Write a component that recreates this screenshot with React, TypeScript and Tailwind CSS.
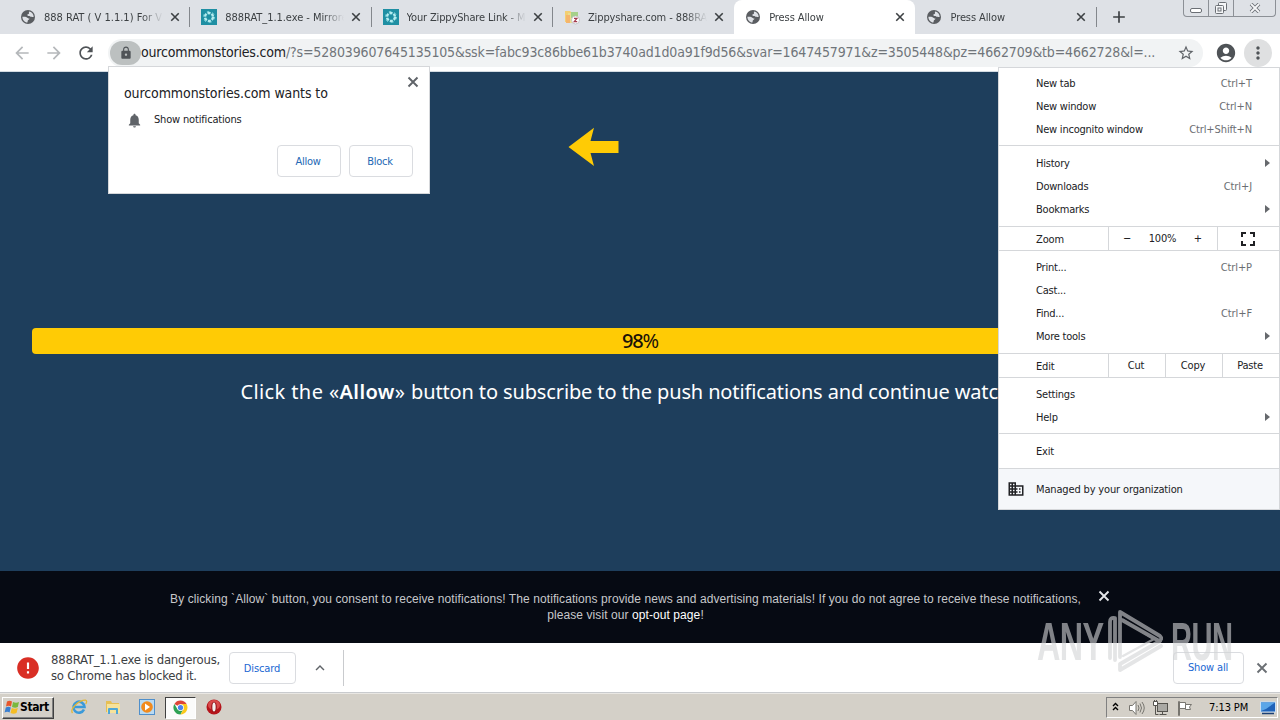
import type { ReactNode } from 'react';
import {
  MdAccountCircle,
  MdAdd,
  MdArrowBack,
  MdArrowForward,
  MdDomain,
  MdError,
  MdExpandLess,
  MdFullscreen,
  MdLock,
  MdMoreVert,
  MdNotifications,
  MdRefresh,
  MdStarBorder,
} from 'react-icons/md';

function CrossIcon({ className }: { className: string }) {
  return (
    <svg viewBox="0 0 12 12" className={`size-3 shrink-0 ${className}`}>
      <path d="M1.500 1.500l9 9M10.500 1.500l-9 9" stroke="currentColor" strokeWidth="1.900" />
    </svg>
  );
}

function GlobeIcon() {
  return (
    <svg viewBox="0 0 16 16" className="size-4 shrink-0">
      <circle cx="8" cy="8" r="7" fill="#5a5d61" />
      <path d="M9 2.4c2.700.4 4.700 2.600 4.700 5.400-1 .5-1.600-.3-2.500-.1-.8.2-1-.6-1.700-.7-.9-.1-1.500.2-2-.4-.6-.7.2-1.300 1-1.500.7-.2.3-1.300.5-2.700z" fill="#dee1e6" />
      <path d="M2.400 7.700c1.500.2 3-.2 4.200.6 1 .6 1.500 1.200 2.700 1.300.5.6-.5 1.200-1.100 1.500-.7.4-.3 1.500-.8 2.500-2.800-.2-5-2.700-5-5.900z" fill="#dee1e6" />
    </svg>
  );
}

function MirrorIcon() {
  return (
    <svg viewBox="0 0 16 16" className="size-4 shrink-0">
      <rect width="16" height="16" fill="#1f8fa3" />
      <circle cx="8" cy="8" r="4" fill="none" stroke="#b5edf0" strokeWidth="2.400" strokeDasharray="3.100 1.100" />
      <circle cx="8" cy="8" r="5.600" fill="none" stroke="#7bd0d8" strokeWidth="1" strokeDasharray="2.500 3.360" />
    </svg>
  );
}

function ZippyIcon() {
  return (
    <svg viewBox="0 0 16 16" className="size-4 shrink-0">
      <path d="M1 2h5l1 1v10H1z" fill="#f3cf72" />
      <path d="M4 4h9v10H4z" fill="#e9dd8e" />
      <path d="M7 3h7v6H7z" fill="#a5d08a" />
      <path d="M2 6h4v8H2z" fill="#f5b56b" />
      <circle cx="11.500" cy="11" r="4" fill="#fff" stroke="#b9b9bf" strokeWidth=".8" />
      <path d="M10 9.300h3L10.200 12.700h3" fill="none" stroke="#a33a4c" strokeWidth="1.200" />
    </svg>
  );
}

const tabs: { title: string; icon: ReactNode; active?: boolean; sep?: boolean; tracking: string }[] = [
  { title: '888 RAT ( V 1.1.1) For V', icon: <GlobeIcon />, sep: true, tracking: 'tracking-[0px]' },
  { title: '888RAT_1.1.exe - Mirrored', icon: <MirrorIcon />, sep: true, tracking: 'tracking-[-0.05px]' },
  { title: 'Your ZippyShare Link - Mirrored', icon: <MirrorIcon />, sep: true, tracking: 'tracking-[-0.15px]' },
  { title: 'Zippyshare.com - 888RAT_1.1', icon: <ZippyIcon />, tracking: 'tracking-[-0.1px]' },
  { title: 'Press Allow', icon: <GlobeIcon />, active: true, tracking: 'tracking-[-0.1px]' },
  { title: 'Press Allow', icon: <GlobeIcon />, sep: true, tracking: 'tracking-[-0.1px]' },
];

function TabStrip() {
  return (
    <div className="relative flex h-[34px] shrink-0 bg-[#dee1e6] pl-[9px]">
      {tabs.map((tab, i) => (
        <div
          key={i}
          className={`flex w-[181.3px] shrink-0 items-center pl-[11px] ${tab.active ? 'rounded-t-lg bg-white' : ''}`}
        >
          {tab.icon}
          <span
            className={`ml-[8px] mt-[2px] w-[119px] overflow-hidden whitespace-nowrap text-[11px] text-[#3c4043] [mask-image:linear-gradient(to_right,black_82%,transparent)] ${tab.tracking}`}
          >
            {tab.title}
          </span>
          <CrossIcon className="ml-[6px] p-px text-[#3c4043]" />
          <span className={`ml-auto h-5 w-px ${tab.sep ? 'bg-[#83878c]' : ''}`} />
        </div>
      ))}
      <MdAdd className="ml-[12px] mt-[7px] size-5 text-[#3c4043]" />

      {/* Window buttons */}
      <div className="absolute right-[4px] top-0 flex h-[17px] w-[93px] rounded-b-[4px] border border-t-0 border-[#8c9096] text-[#6b6f75]">
        <div className="flex w-[25px] justify-center border-r border-[#8c9096] pt-[8px]">
          <span className="h-[5px] w-[12px] rounded-[2px] border border-[#6b6f75] bg-white" />
        </div>
        <div className="flex w-[25px] justify-center border-r border-[#8c9096] pt-[2px]">
          <svg viewBox="0 0 14 13" className="h-[13px] w-[14px]" fill="#f5f6f8" stroke="#6b6f75">
            <rect x="4.500" y=".5" width="8" height="8" rx="1" />
            <rect x="1.500" y="3.500" width="8" height="8" rx="1" />
            <rect x="4" y="6" width="3" height="3" />
          </svg>
        </div>
        <div className="flex flex-1 justify-center pt-[3px]">
          <svg viewBox="0 0 12 10" className="h-[10px] w-[12px]">
            <path d="M2 1l8 8M10 1L2 9" stroke="#6b6f75" strokeWidth="3.600" />
            <path d="M2 1l8 8M10 1L2 9" stroke="#f5f6f8" strokeWidth="1.800" />
          </svg>
        </div>
      </div>
    </div>
  );
}

function Toolbar() {
  return (
    <div className="flex h-[38px] shrink-0 items-center border-b border-[#d3dbe2] bg-white pl-[12px]">
      <MdArrowBack className="size-5 text-[#b5b8bb]" />
      <MdArrowForward className="ml-[12px] size-5 text-[#b5b8bb]" />
      <MdRefresh className="ml-[12px] size-5 text-[#4f5357]" />
      <div className="ml-[12px] flex h-7 w-[1095px] items-center rounded-full bg-[#f1f3f4] pl-[2px]">
        <span className="flex h-6 w-[31px] shrink-0 items-center justify-center rounded-full bg-[#bcc0c0]">
          <MdLock className="size-[14px] text-[#4f5357]" />
        </span>
        <span className="w-[1036px] shrink-0 whitespace-nowrap text-[14px] text-[#70757a]">
          <span className="tracking-[-0.18px] text-[#202124]">ourcommonstories.com</span>
          <span className="tracking-[-0.145px]">
            /?s=528039607645135105&amp;ssk=fabc93c86bbe61b3740ad1d0a91f9d56&amp;svar=1647457971&amp;z=3505448&amp;pz=4662709&amp;tb=4662728&amp;l=...
          </span>
        </span>
        <MdStarBorder className="size-[18px] shrink-0 text-[#5f6368]" />
      </div>
      <MdAccountCircle className="ml-[12px] size-[22px] shrink-0 text-[#4f5357]" />
      <span className="ml-[7px] flex size-7 shrink-0 items-center justify-center rounded-full bg-[#dfe0e1]">
        <MdMoreVert className="size-5 text-[#4f5357]" />
      </span>
    </div>
  );
}

function PermissionPopup() {
  return (
    <div className="absolute left-[108px] top-[66px] h-[128px] w-[322px] border border-[#d5d7da] bg-white pl-[15px] pr-[16px] pt-[7px] text-[#202124]">
      <div className="flex h-[37px] items-center justify-between">
        <span className="whitespace-nowrap pt-[2px] text-[14px] tracking-[-0.1px]">ourcommonstories.com wants to</span>
        <CrossIcon className="-mr-[6px] mb-[21px] text-[#5f6368]" />
      </div>
      <div className="flex h-4 items-center pl-[2px]">
        <MdNotifications className="mt-[2px] size-[17px] text-[#5f6368]" />
        <span className="ml-[11px] mt-[2px] text-[11px] tracking-[-0.17px]">Show notifications</span>
      </div>
      <div className="mt-[18px] flex justify-end gap-2">
        {['Allow', 'Block'].map((label) => (
          <button key={label} className="h-8 w-16 rounded-[4px] border border-[#dadce0] pr-[2px] pt-[2px] text-[11px] tracking-[-0.3px] text-[#2368b5]">
            {label}
          </button>
        ))}
      </div>
    </div>
  );
}

function MenuItem({ label, keys, sub }: { label: string; keys?: string; sub?: boolean }) {
  return (
    <div className="flex h-[23px] items-center pl-[37px]">
      <span className="tracking-[-0.22px]">{label}</span>
      {keys && <span className="ml-auto mr-[27px] tracking-[-0.1px] text-[#6b6e72]">{keys}</span>}
      {sub && (
        <svg viewBox="0 0 5 8" className="mb-[3px] ml-auto mr-[9px] h-2 w-[5px]">
          <path d="M0 0l5 4-5 4z" fill="#66696d" />
        </svg>
      )}
    </div>
  );
}

function ChromeMenu() {
  return (
    <div className="absolute left-[998px] top-[67px] h-[443px] w-[282px] border border-[#d5d7da] bg-white text-[11px] text-[#202124]">
      <div className="h-[78px] border-b border-[#d5d7da] pt-[5px]">
        <MenuItem label="New tab" keys="Ctrl+T" />
        <MenuItem label="New window" keys="Ctrl+N" />
        <MenuItem label="New incognito window" keys="Ctrl+Shift+N" />
      </div>
      <div className="h-[81px] border-b border-[#d5d7da] pt-[7px]">
        <MenuItem label="History" sub />
        <MenuItem label="Downloads" keys="Ctrl+J" />
        <MenuItem label="Bookmarks" sub />
      </div>
      <div className="flex h-[24px] items-center border-b border-[#d5d7da] tracking-[-0.15px]">
        <span className="w-[109px] pl-[37px] pt-[3px]">Zoom</span>
        <span className="flex h-full w-[109px] items-center justify-between border-l border-[#d5d7da] pl-[14px] pr-[15px] pt-px">
          <span>−</span>
          <span>100%</span>
          <span>+</span>
        </span>
        <span className="flex h-full flex-1 items-center justify-center border-l border-[#d5d7da] pr-[2px]">
          <MdFullscreen className="size-6" />
        </span>
      </div>
      <div className="h-[103px] border-b border-[#d5d7da] pt-[6px]">
        <MenuItem label="Print..." keys="Ctrl+P" />
        <MenuItem label="Cast..." />
        <MenuItem label="Find..." keys="Ctrl+F" />
        <MenuItem label="More tools" sub />
      </div>
      <div className="flex h-[24px] items-center border-b border-[#d5d7da] tracking-[-0.2px]">
        <span className="w-[109px] pl-[37px] pt-[3px]">Edit</span>
        {['Cut', 'Copy', 'Paste'].map((label) => (
          <span key={label} className="flex h-full w-[57px] items-center justify-center border-l border-[#d5d7da] pr-[2px] pt-px">
            {label}
          </span>
        ))}
      </div>
      <div className="h-[56px] border-b border-[#d5d7da] pt-[6px]">
        <MenuItem label="Settings" />
        <MenuItem label="Help" sub />
      </div>
      <div className="h-[35px] border-b border-[#d5d7da] pt-[7px]">
        <MenuItem label="Exit" />
      </div>
      <div className="flex h-[40px] items-center bg-[#f5f7fa] pl-[8px]">
        <MdDomain className="size-[18px] text-[#202124]" />
        <span className="ml-[11px] mt-[2px] tracking-[-0.15px]">Managed by your organization</span>
      </div>
    </div>
  );
}

function PageContent() {
  return (
    <div className="flex h-[571px] shrink-0 flex-col bg-[#1e3e5c]">
      <svg viewBox="0 0 52 40" className="ml-[568px] mt-[55px] h-[40px] w-[52px] shrink-0">
        <path d="M.5 20L26 .8 22.500 14H50.500V26H22.500L26 39z" fill="#ffcb05" />
      </svg>
      <div className="mx-[32px] mt-[161px] flex h-[26px] shrink-0 items-center justify-center rounded-[4px] bg-[#ffcb05] font-['Noto_Sans'] text-[20px] tracking-[-1.2px] text-[#1a1208]">
        <span className="font-medium">98</span>%
      </div>
      <div className="mt-[23px] text-center font-['Noto_Sans'] text-[20px] leading-[30px] tracking-[-0.13px] text-white">
        <span className="tracking-[0.4px]">
          Click the «<b className="font-semibold">Allow</b>»{' '}
        </span>
        button to subscribe to the push notifications and continue watching
      </div>
      <div className="mt-auto flex h-[72px] shrink-0 bg-[#060a13] pl-[160px]">
        <p className="w-[931px] pt-[20px] text-center font-['Liberation_Sans'] text-[12px] leading-4 tracking-[0.083px] text-[#c6c8cb]">
          By clicking `Allow` button, you consent to receive notifications! The notifications provide news and advertising materials! If you do not agree to receive these notifications,
          <br />
          please visit our <span className="text-white">opt-out page</span>!
        </p>
        <CrossIcon className="ml-[7px] mt-[19px] text-[#e4e6e9]" />
      </div>
    </div>
  );
}

function DownloadBar() {
  return (
    <div className="flex h-[50px] shrink-0 items-center border-b border-[#c9cbce] bg-white text-[#3c4043]">
      <MdError className="ml-[15px] size-[26px] text-[#d92f25]" />
      <p className="ml-[10px] w-[178px] whitespace-nowrap text-[13px] leading-4 tracking-[-0.22px]">
        888RAT_1.1.exe is dangerous,
        <br />
        so Chrome has blocked it.
      </p>
      <button className="h-8 w-[67px] rounded-[4px] border border-[#dadce0] pr-px pt-[3px] text-[11px] tracking-[-0.1px] text-[#1a67d2]">Discard</button>
      <MdExpandLess className="ml-[15px] size-[18px] text-[#5f6368]" />
      <span className="ml-[14px] h-9 w-px bg-[#c9cbce]" />
      <button className="ml-auto h-8 w-[71px] rounded-[4px] border border-[#dadce0] pr-px pt-px text-[11px] tracking-[-0.15px] text-[#1a67d2]">Show all</button>
      <CrossIcon className="ml-[12px] mr-[12px] text-[#6b6f74]" />
    </div>
  );
}

function Watermark() {
  return (
    <div className="pointer-events-none absolute left-[1037px] top-[609px] flex h-[64px] w-[196px] items-center justify-between text-[#d3d4d6] opacity-60">
      <span className="w-[68px] origin-left scale-x-[0.61] font-['Liberation_Sans'] text-[53px] font-bold leading-none tracking-[-1px]">ANY</span>
      <svg viewBox="0 0 56 64" className="-ml-[2px] mr-[4px] h-[64px] w-[56px] shrink-0" fill="none" stroke="currentColor" strokeWidth="3.800" strokeLinejoin="round" strokeLinecap="round">
        <path d="M3 49V13q0-5 5-4v42" />
        <path d="M13 48V3l40 24q3 3-1 5L15 11" />
        <path d="M53 32L13 55v6l41-24" />
        <path d="M16 11L47 30 16 47" strokeWidth="2.500" />
      </svg>
      <span className="w-[62px] origin-left scale-x-[0.55] font-['Liberation_Sans'] text-[53px] font-bold leading-none tracking-[-1px]">RUN</span>
    </div>
  );
}

function WindowsFlag() {
  return (
    <svg viewBox="0 0 16 16" className="mb-[2px] size-4 shrink-0">
      <path d="M3 2.500c2-1 3.500-.8 5 0L7 7.500c-1.500-.8-3-.9-5 0z" fill="#e8562a" />
      <path d="M9 3c2 .9 4 .9 6 0l-1.200 5C12 9 10 8.800 8 8z" fill="#7ab83c" />
      <path d="M1.800 8.500c2-1 3.500-.8 5 0l-1.200 5c-1.500-.8-3-.9-5 0z" fill="#3a7fd0" />
      <path d="M7.800 9c2 .9 4 .9 6 0l-1.300 5c-2 .9-4 .8-6 0z" fill="#f5bd24" />
    </svg>
  );
}

function Taskbar() {
  return (
    <div className="flex h-[27px] shrink-0 items-center border-t border-[#e9e7e3] bg-[#d4d0c8] text-black">
      <button className="ml-[2px] mt-px flex h-[22px] w-[52px] items-center border border-b-[#404040] border-l-white border-r-[#404040] border-t-white pl-px text-[12px] font-bold shadow-[inset_-1px_-1px_0_#808080]">
        <WindowsFlag />
        <span className="mb-px tracking-[-0.4px]">Start</span>
      </button>

      {/* Quick launch */}
      <svg viewBox="0 0 18 18" className="ml-[16px] size-[18px]">
        <path d="M14 11.500A5.500 5.500 0 1 1 14.500 9H5" fill="none" stroke="#3b9ad9" strokeWidth="2.600" />
        <path d="M2.500 15C-.5 11 9 2 15.500 2.200c1.700.4 1.200 2.300.2 3.800" fill="none" stroke="#e3b735" strokeWidth="1.300" />
      </svg>
      <svg viewBox="0 0 18 18" className="ml-[16px] size-[18px]">
        <path d="M2 3h5l1 2h7v9H2z" fill="#e6bf55" />
        <path d="M3 6h13v9H3z" fill="#f6e29a" />
        <path d="M4 16V11q0-1 1-1h8q1 0 1 1v5h-2v-4H6v4z" fill="#4fa7d6" />
      </svg>
      <svg viewBox="0 0 18 18" className="ml-[16px] size-[18px]">
        <rect x="1.500" y="1.500" width="15" height="15" fill="#b9daf2" stroke="#4f8fcb" />
        <circle cx="9" cy="9" r="5.800" fill="#f18a1d" />
        <path d="M7 5.500l5 3.500-5 3.500z" fill="#fff" />
      </svg>
      <span className="ml-[9px] mt-px flex h-[22px] w-[31px] items-center justify-center border border-b-white border-l-[#404040] border-r-white border-t-[#404040] bg-[#fbfbfa]">
        <svg viewBox="0 0 16 16" className="size-[15px]">
          <path d="M8 8L1.500 4.200A7.500 7.500 0 0 1 14.500 4.300H8z" fill="#dd4537" />
          <path d="M8 8l-3.200 1.900L1.500 4.200A7.500 7.500 0 0 0 8 15.500L11 9.800z" fill="#2fa254" />
          <path d="M14.500 4.300H8L11.200 9.900 8 15.500A7.500 7.500 0 0 0 14.500 4.300z" fill="#fbc91b" />
          <circle cx="8" cy="8" r="3.600" fill="#fff" />
          <circle cx="8" cy="8" r="2.800" fill="#4a83ed" />
        </svg>
      </span>
      <svg viewBox="0 0 16 16" className="ml-[10px] size-4">
        <circle cx="8" cy="8" r="7.500" fill="#b5151b" />
        <ellipse cx="8" cy="6" rx="6" ry="5" fill="#d94a4a" />
        <ellipse cx="8" cy="8" rx="2.700" ry="5.300" fill="#8d0a10" />
        <ellipse cx="8" cy="8" rx="1.700" ry="4.500" fill="#f4f0ee" />
      </svg>

      {/* Tray */}
      <div className="ml-auto mr-[2px] mt-px flex h-[21px] w-[172px] items-center border border-b-white border-l-[#808080] border-r-white border-t-[#808080] text-[11px]">
        <svg viewBox="0 0 7 9" className="mb-[3px] ml-[5px] h-[9px] w-[7px]" fill="none" stroke="#000" strokeWidth="1.400">
          <path d="M1 4l2.500-2.500L6 4M1 8l2.500-2.500L6 8" />
        </svg>
        <svg viewBox="0 0 17 16" className="ml-[9px] h-4 w-[17px]" fill="none" stroke="#77756f">
          <path d="M1.500 5.500h3l3.500-4v13l-3.500-4h-3z" fill="#fff" />
          <path d="M10 5q2 3 0 6M12 3.500q3 4.500 0 9M14 2q4.500 6 0 12" />
        </svg>
        <svg viewBox="0 0 17 16" className="ml-[7px] h-4 w-[17px]" fill="none" stroke="#55534e">
          <rect x="5.500" y="3.500" width="10" height="8" fill="#aaa9a4" />
          <path d="M7.500 14.500h7M10.500 12v2M3.500 6v8.500h3" />
          <path d="M1.500 1.500h4v4h-4zM2.500 0v2M4.500 0v2" fill="#fff" />
        </svg>
        <svg viewBox="0 0 17 16" className="ml-[7px] h-4 w-[17px]" fill="#fff" stroke="#77756f">
          <path d="M2.500 15.500v-14h1v14zM3.500 2.500h6v6h-6z" />
          <path d="M9.500 4.500h6l-2 2.500 1 2.500h-5z" />
        </svg>
        <span className="ml-[16px] mt-px whitespace-nowrap tracking-[-0.1px]">7:13 PM</span>
        <svg viewBox="0 0 16 14" className="ml-auto mr-[1px] h-[14px] w-4">
          <rect x=".5" y="1" width="15" height="10" fill="#1f62b8" stroke="#c9dff5" />
          <path d="M1 1.500h14L6 8 1 10z" fill="#5ba6e8" />
          <path d="M2 12.500h12" stroke="#1b3f73" strokeWidth="1.500" />
        </svg>
      </div>
    </div>
  );
}

export default function App() {
  return (
    <div className="relative flex h-[720px] w-[1280px] flex-col overflow-hidden bg-white font-['DejaVu_Sans_Condensed','DejaVu_Sans',sans-serif]">
      <TabStrip />
      <Toolbar />
      <PageContent />
      <DownloadBar />
      <Taskbar />

      {/* Overlays */}
      <PermissionPopup />
      <ChromeMenu />
      <Watermark />
    </div>
  );
}
